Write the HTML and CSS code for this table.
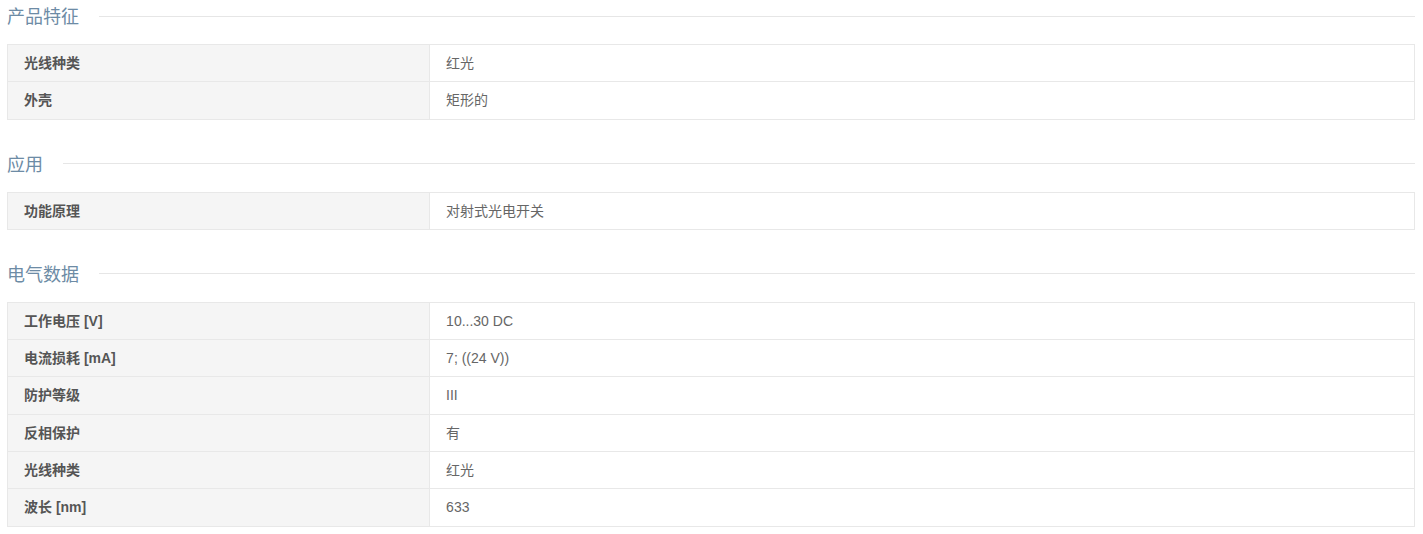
FILE: index.html
```html
<!DOCTYPE html>
<html lang="zh-CN">
<head>
<meta charset="utf-8">
<title>产品参数</title>
<link rel="stylesheet" href="styles.css">
</head>
<body>
<div class="page">
  <section class="group">
    <h2 class="group-title"><span>产品特征</span></h2>
    <table class="spec">
      <tr><th>光线种类</th><td>红光</td></tr>
      <tr><th>外壳</th><td>矩形的</td></tr>
    </table>
  </section>
  <section class="group">
    <h2 class="group-title"><span>应用</span></h2>
    <table class="spec">
      <tr><th>功能原理</th><td>对射式光电开关</td></tr>
    </table>
  </section>
  <section class="group">
    <h2 class="group-title"><span>电气数据</span></h2>
    <table class="spec">
      <tr><th>工作电压 [V]</th><td>10...30 DC</td></tr>
      <tr><th>电流损耗 [mA]</th><td>7; ((24 V))</td></tr>
      <tr><th>防护等级</th><td>III</td></tr>
      <tr><th>反相保护</th><td>有</td></tr>
      <tr><th>光线种类</th><td>红光</td></tr>
      <tr><th>波长 [nm]</th><td>633</td></tr>
    </table>
  </section>
</div>
</body>
</html>
```

FILE: styles.css
```css
html, body {
  margin: 0;
  padding: 0;
  background: #ffffff;
}
body {
  font-family: "Liberation Sans", "Noto Sans CJK SC", sans-serif;
  font-size: 14px;
  color: #666666;
}
.page {
  padding: 5px 8px 0 7px;
}
.group {
  margin-bottom: 33px;
}
.group-title {
  display: flex;
  align-items: center;
  gap: 20px;
  margin: 0 0 15px 0;
  height: 24px;
  font-size: 18px;
  font-weight: normal;
  color: #6d8ba5;
  line-height: 24px;
}
.group-title::after {
  content: "";
  flex: 1;
  height: 1px;
  margin-top: -2px;
  background: #e6e6e6;
}
.spec {
  width: 100%;
  border-collapse: collapse;
  table-layout: fixed;
}
.spec th, .spec td {
  box-sizing: border-box;
  border: 1px solid #e8e8e8;
  padding: 9px 16px;
  line-height: 18.3px;
  text-align: left;
  vertical-align: middle;
}
.spec th {
  width: 30%;
  background: #f5f5f5;
  font-weight: bold;
  color: #555555;
}
.spec td {
  background: #ffffff;
  color: #666666;
}
```
